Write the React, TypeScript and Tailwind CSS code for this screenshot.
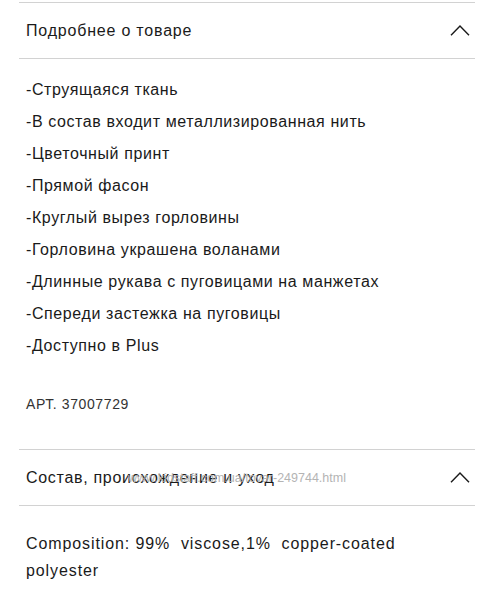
import React from "react";

const Chevron = () => (
  <svg width="20" height="11" viewBox="0 0 20 11" fill="none" className="block">
    <path d="M1 10.2 L10 1 L19 10.2" stroke="#1a1a1a" strokeWidth="1.4" />
  </svg>
);

const items = [
  "-Струящаяся ткань",
  "-В состав входит металлизированная нить",
  "-Цветочный принт",
  "-Прямой фасон",
  "-Круглый вырез горловины",
  "-Горловина украшена воланами",
  "-Длинные рукава с пуговицами на манжетах",
  "-Спереди застежка на пуговицы",
  "-Доступно в Plus",
];

export default function App() {
  return (
    <div
      className="relative w-full h-[600px] overflow-hidden bg-white px-[19px] text-[#1a1a1a]"
      style={{ fontFamily: '"Liberation Sans", Arial, sans-serif' }}
    >
      <div className="mt-[2px] border-t border-[#d2d2d2]">
        <div className="flex h-[56px] items-center justify-between pl-[7px] pr-[5px] border-b border-[#d2d2d2]">
          <span className="text-[16px] tracking-[0.8px]">Подробнее о товаре</span>
          <Chevron />
        </div>
        <div className="pl-[7px] pt-[15px] pb-[35px] border-b border-[#d2d2d2]">
          <ul>
            {items.map((t) => (
              <li key={t} className="text-[16px] leading-[32px] tracking-[0.6px]">
                {t}
              </li>
            ))}
          </ul>
          <div className="mt-[32px] text-[14px] leading-[20px] tracking-[0.6px] text-[#333]">
            АРТ. 37007729
          </div>
        </div>
        <div className="flex h-[56px] items-center justify-between pl-[7px] pr-[5px] border-b border-[#d2d2d2]">
          <span className="text-[16px] tracking-[0.7px]">Состав, происхождение и уход</span>
          <Chevron />
        </div>
        <div className="pl-[7px] pt-[24px] text-[16px] leading-[27px] tracking-[0.9px]">
          <div className="whitespace-pre">Composition: 99%  viscose,1%  copper-coated</div>
          <div>polyester</div>
        </div>
      </div>
      <div className="absolute left-[128px] top-[470px] text-[12.5px] leading-[16px] text-[#b4b4b4] pointer-events-none">
        www.kidstaff.com.ua/tovar-249744.html
      </div>
    </div>
  );
}
